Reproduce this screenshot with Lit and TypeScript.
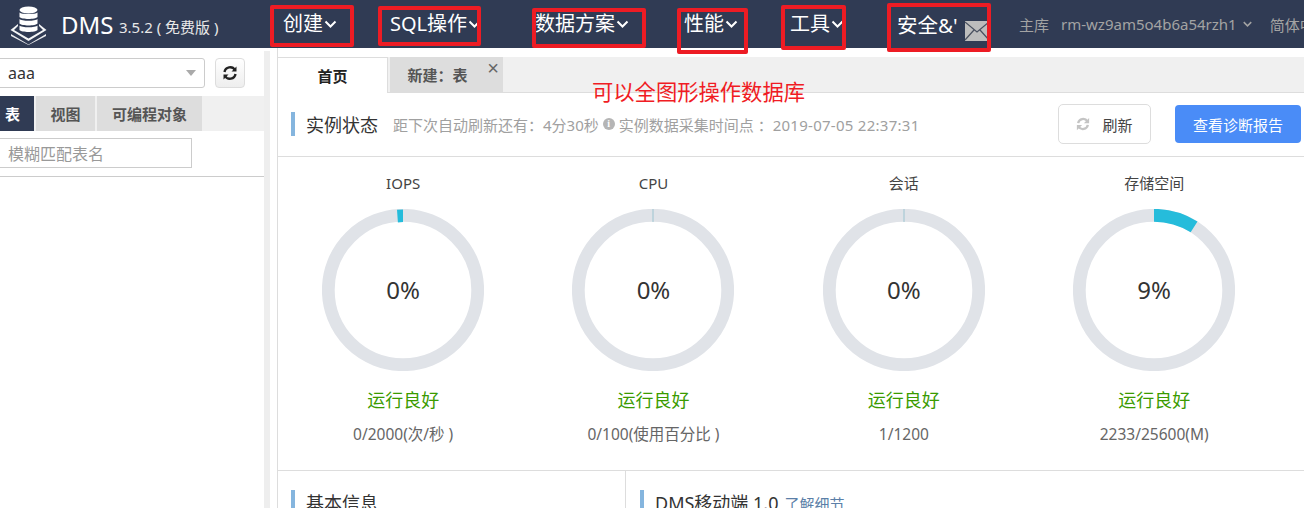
import { LitElement, html, css, svg } from "lit";
import { customElement } from "lit/decorators.js";

const NAV = [
  { t: "创建", w: 107 },
  { t: "SQL操作", w: 145 },
  { t: "数据方案", w: 149 },
  { t: "性能", w: 106 },
  { t: "工具", w: 107 },
];
const BOXES = [
  { x: 270, y: 5, w: 84, h: 42 },
  { x: 378, y: 6, w: 103, h: 40 },
  { x: 532, y: 8, w: 114, h: 40 },
  { x: 677, y: 8, w: 71, h: 46 },
  { x: 781, y: 5, w: 65, h: 45 },
  { x: 887, y: 3, w: 104, h: 49 },
];
const GAUGES = [
  { l: "IOPS", p: "0%", s: "0/2000(次/秒 )", v: 0, tick: "left" },
  { l: "CPU", p: "0%", s: "0/100(使用百分比 )", v: 0, tick: "thin" },
  { l: "会话", p: "0%", s: "1/1200", v: 0, tick: "thin" },
  { l: "存储空间", p: "9%", s: "2233/25600(M)", v: 9, tick: "" },
];
const R = 74.7;
const C = 2 * Math.PI * R;

const chev = (w = 13) => html`<svg class="chev" width=${w} height="8" viewBox="0 0 12 8"><path d="M1 1.500 6 6.500 11 1.500" fill="none" stroke="currentColor" stroke-width="2"/></svg>`;

@customElement("app-root")
export class AppRoot extends LitElement {
  static styles = css`
    :host { display: block; position: relative; width: 1304px; height: 508px; overflow: hidden; background: #fff;
      font-family: "Noto Sans", "Noto Sans CJK SC", sans-serif; color: #333; }
    * { box-sizing: border-box; }
    header { height: 48px; background: #303b54; display: flex; align-items: center; color: #fff; white-space: nowrap; overflow: hidden; }
    header > * { flex: none; }
    .logo { margin-left: 10px; width: 37px; height: 42px; }
    .dms { margin-left: 14px; font-size: 24px; width: 58px; }
    .ver { font-size: 15px; width: 164px; padding-top: 5px; color: #e8e8e8; }
    .nav { font-size: 20px; display: flex; align-items: center; gap: 1px; color: #fff; line-height: 48px; height: 48px; }
    .sec { width: 68px; font-size: 20.500px; overflow: hidden; }
    .mail { margin-right: 30px; margin-top: 14px; }
    .right { font-size: 15px; color: #a3a3a3; display: flex; align-items: center; }
    .right .host { margin-left: 12px; }
    .right .chev { margin: 0 18px 0 6px; }
    .body { display: grid; grid-template-columns: 264px 6px 7px 1fr; height: 460px; }
    .side { position: relative; padding-top: 10px; }
    .selrow { display: flex; gap: 10px; margin-left: -10px; height: 30px; }
    .sel { width: 215px; border: 1px solid #ccc; border-radius: 3px; font-size: 16px; display: flex; align-items: center; justify-content: space-between; padding: 0 8px 0 17px; color: #333; }
    .caret { width: 0; height: 0; border: 5px solid transparent; border-top: 6px solid #aaa; border-bottom: 0; }
    .rbtn { width: 30px; border: 1px solid #ddd; border-radius: 4px; background: linear-gradient(#fff, #eee); display: flex; align-items: center; justify-content: center; }
    .stabs { margin-top: 8px; height: 35px; background: #f0f0f0; display: flex; gap: 2px; font-size: 15px; font-weight: 700; color: #555; }
    .stabs span { display: flex; align-items: center; justify-content: center; background: #ddd; }
    .stabs .on { background: #303b54; color: #fff; width: 34px; padding-right: 9px; }
    .stabs .a { width: 59px; }
    .stabs .b { width: 105px; }
    .filter { margin-top: 7px; width: 192px; height: 30px; border: 1px solid #ccc; border-left: 0; font-size: 16px; color: #999; padding-left: 8px; display: flex; align-items: center; }
    .rule { margin-top: 8px; border-top: 1px solid #ccc; }
    .scroll { background: #eee; margin-top: 3px; }
    .main { padding-top: 9px; border-left: 1px solid #ddd; grid-column: 4; margin-left: 0; min-width: 0; }
    .tabs { height: 36px; background: #f0f0f0; border-bottom: 1px solid #ddd; display: flex; font-size: 15px; font-weight: 700; margin-left: -1px; }
    .tabs .home { width: 111px; height: 36px; background: #fff; border: 1px solid #ddd; border-bottom: 0; display: flex; align-items: center; justify-content: center; color: #222; }
    .tabs .new { position: relative; margin-left: 2px; width: 113px; height: 35px; background: #ddd; color: #555; display: flex; align-items: center; justify-content: center; padding-right: 18px; }
    .close { position: absolute; right: 4px; top: 2px; font: 400 20px/18px "Liberation Sans", sans-serif; color: #666; }
    .inst { height: 64px; border-bottom: 1px solid #ddd; display: flex; align-items: center; padding: 0 0 1px 13px; white-space: nowrap; }
    .bar { width: 4px; height: 24px; background: #85b5de; flex: none; }
    .title { font-size: 18px; margin-left: 11px; color: #333; }
    .sub { margin-left: 15px; font-size: 15px; color: #a0a0a0; display: flex; align-items: center; gap: 4px; }
    .date { letter-spacing: .27px; }
    .info { width: 12px; height: 12px; border-radius: 50%; background: #b5b5b5; color: #fff; font: 700 10px/12px "Liberation Serif", serif; text-align: center; flex: none; }
    .btns { margin-left: auto; display: flex; align-items: center; gap: 24px; margin-right: 3px; }
    .refresh { width: 93px; height: 40px; border: 1px solid #ddd; border-radius: 5px; font-size: 15px; display: flex; align-items: center; justify-content: center; gap: 12px; color: #444; }
    .report { width: 126px; height: 38px; border-radius: 4px; background: #4a8cf7; color: #fff; font-size: 15px; display: flex; align-items: center; justify-content: center; }
    .gauges { display: grid; grid-template-columns: repeat(4, 250.33px); height: 314px; border-bottom: 1px solid #ddd; }
    .g { display: flex; flex-direction: column; align-items: center; padding-top: 15px; }
    .g .l { font-size: 15px; line-height: 22px; color: #444; }
    .ring { position: relative; margin-top: 15px; width: 162px; height: 162px; display: flex; align-items: center; justify-content: center; padding-bottom: 2px; }
    .ring svg { position: absolute; inset: 0; }
    .pct { font-size: 24px; color: #333; }
    .ok { margin-top: 16px; font-size: 18px; line-height: 26px; color: #3a9b00; }
    .s { margin-top: 11px; font-size: 15.500px; line-height: 20px; color: #666; }
    .bot { display: grid; grid-template-columns: 347px 1fr; height: 60px; }
    .cell { display: flex; align-items: flex-start; padding: 19px 0 0 13px; }
    .cell + .cell { border-left: 1px solid #ddd; padding-left: 14px; }
    .cell .title { line-height: 26px; }
    .cell a { font-size: 15px; line-height: 28px; color: #5b7fa8; margin-left: 6px; }
    .annot { position: absolute; left: 592px; top: 78px; font-size: 21.300px; line-height: 28px; color: #f01c24; white-space: nowrap; }
    .box { position: absolute; border: 4px solid #ed1c24; border-radius: 2px; pointer-events: none; }
  `;

  private ring(g: (typeof GAUGES)[number]) {
    return html`<svg width="162" height="162" viewBox="0 0 162 162">
      <circle cx="81" cy="81" r=${R} fill="none" stroke="#e0e3e8" stroke-width="12.800"/>
      ${g.v > 0 ? svg`<circle cx="81" cy="81" r=${R} fill="none" stroke="#25bcdb" stroke-width="12.800" stroke-dasharray="${(C * g.v) / 100} ${C}" transform="rotate(-90 81 81)"/>` : ""}
      ${g.tick === "left" ? svg`<path d="M81 0.500A80.500 80.500 0 0 0 75 0.800L75.900 13.500A68 68 0 0 1 81 13Z" fill="#25bcdb"/>` : ""}
      ${g.tick === "thin" ? svg`<path d="M81 0V13" stroke="#9cc4d0" stroke-width="1"/>` : ""}
    </svg>`;
  }

  render() {
    return html`
      <header>
        <svg class="logo" viewBox="0 0 37 42" fill="#fff">
          <ellipse cx="18.500" cy="7" rx="9" ry="3.500"/>
          <path d="M9.500 9.500c2 2 16 2 18 0v4.500c-2 2.600-16 2.600-18 0z"/>
          <path d="M9.500 16c2 2.400 16 2.400 18 0v4.500c-2 2.600-16 2.600-18 0z"/>
          <path d="M9.500 22.500c2 2.400 16 2.400 18 0V27c-2 2.600-16 2.600-18 0z"/>
          <path d="M8 21 0.500 27 18.500 38 36.500 27 29 21v2l4 4-14.500 8.500L4 27l4-4z" opacity=".95"/>
          <path d="M1 31l17.500 10.500L36 31v2L18.500 42 1 33z" opacity=".9"/>
        </svg>
        <span class="dms">DMS</span>
        <span class="ver">3.5.2 ( 免费版 )</span>
        ${NAV.map((n) => html`<span class="nav" style="width:${n.w}px">${n.t}${chev()}</span>`)}
        <span class="sec">安全&amp;'</span>
        <svg class="mail" width="24" height="22" viewBox="0 0 24 22">
          <rect width="24" height="20" y="1" fill="#bdbdbd"/>
          <path d="M0 2 12 12 24 2M0 20 9 10M24 20 15 10" fill="none" stroke="#4a5160" stroke-width="1.200"/>
        </svg>
        <span class="right">主库<span class="host">rm-wz9am5o4b6a54rzh1</span>${chev(9)}简体中文</span>
      </header>
      <div class="body">
        <aside class="side">
          <div class="selrow">
            <div class="sel"><span>aaa</span><i class="caret"></i></div>
            <div class="rbtn">
              <svg width="16" height="16" viewBox="0 0 16 16" fill="none" stroke="#222" stroke-width="2.400">
                <path d="M2.500 7A5.700 5.700 0 0 1 13 5M13.500 9A5.700 5.700 0 0 1 3 11"/>
                <path d="M14.500 1.500V6.500H9.500zM1.500 14.500V9.500H6.500z" fill="#222" stroke="none"/>
              </svg>
            </div>
          </div>
          <div class="stabs"><span class="on">表</span><span class="a">视图</span><span class="b">可编程对象</span></div>
          <div class="filter">模糊匹配表名</div>
          <div class="rule"></div>
        </aside>
        <div class="scroll"></div>
        <div></div>
        <main class="main">
          <div class="tabs">
            <span class="home">首页</span>
            <span class="new">新建：表<span class="close">×</span></span>
          </div>
          <div class="inst">
            <i class="bar"></i><span class="title">实例状态</span>
            <span class="sub"><span>距下次自动刷新还有：4分30秒</span> <i class="info">i</i> <span>实例数据采集时间点 ：<span class="date">2019-07-05 22:37:31</span></span></span>
            <div class="btns">
              <span class="refresh">
                <svg width="14" height="14" viewBox="0 0 16 16" fill="none" stroke="#c4c4c4" stroke-width="2.600">
                  <path d="M2.500 7A5.700 5.700 0 0 1 13 5M13.500 9A5.700 5.700 0 0 1 3 11"/>
                  <path d="M15 1V7H9zM1 15V9H7z" fill="#c4c4c4" stroke="none"/>
                </svg>刷新</span>
              <span class="report">查看诊断报告</span>
            </div>
          </div>
          <div class="gauges">
            ${GAUGES.map((g) => html`<div class="g">
              <span class="l">${g.l}</span>
              <div class="ring">${this.ring(g)}<span class="pct">${g.p}</span></div>
              <span class="ok">运行良好</span>
              <span class="s">${g.s}</span>
            </div>`)}
          </div>
          <div class="bot">
            <div class="cell"><i class="bar"></i><span class="title">基本信息</span></div>
            <div class="cell"><i class="bar"></i><span class="title">DMS移动端 1.0</span><a>了解细节</a></div>
          </div>
        </main>
      </div>
      <div class="annot">可以全图形操作数据库</div>
      ${BOXES.map((b) => html`<div class="box" style="left:${b.x}px;top:${b.y}px;width:${b.w}px;height:${b.h}px"></div>`)}
    `;
  }
}
